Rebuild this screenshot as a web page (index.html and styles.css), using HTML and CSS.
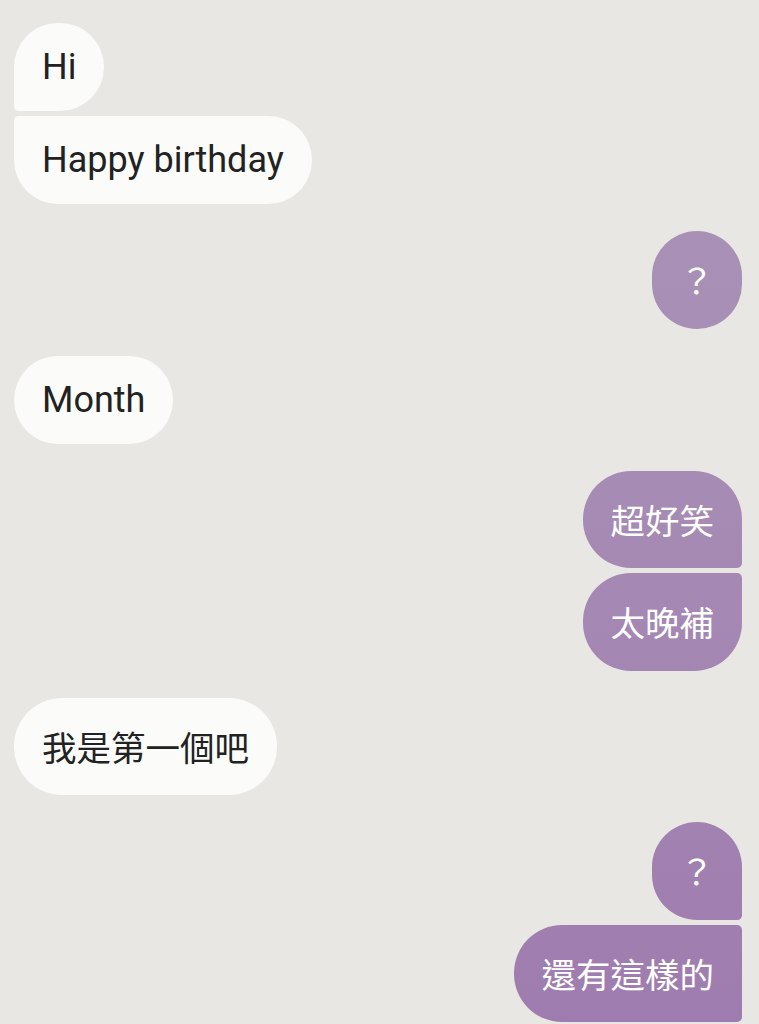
FILE: index.html
```html
<!DOCTYPE html>
<html lang="zh-Hant">
<head>
    <meta charset="UTF-8">
    <meta name="viewport" content="width=device-width, initial-scale=1.0">
    <title>Chat</title>
    <link rel="stylesheet" href="styles.css">
</head>
<body>

<div class="chat">
    <div class="group incoming">
        <div class="bubble first">Hi</div>
        <div class="bubble last">Happy birthday</div>
    </div>

    <div class="group outgoing">
        <div class="bubble cjk">？</div>
    </div>

    <div class="group incoming">
        <div class="bubble">Month</div>
    </div>

    <div class="group outgoing">
        <div class="bubble cjk first">超好笑</div>
        <div class="bubble cjk last">太晚補</div>
    </div>

    <div class="group incoming">
        <div class="bubble cjk">我是第一個吧</div>
    </div>

    <div class="group outgoing">
        <div class="bubble cjk first">？</div>
        <div class="bubble cjk middle">還有這樣的</div>
    </div>
</div>

</body>
</html>
```

FILE: styles.css
```css
body {
    margin: 0;
    padding: 23px 17px 0 14px;
    background-color: #e9e7e3;
    font-family: Roboto, "Noto Sans CJK TC", sans-serif;
    overflow: hidden;
}
.chat {
    display: flex;
    flex-direction: column;
    gap: 27px;
}
.group {
    display: flex;
    flex-direction: column;
    gap: 5px;
}
.incoming {
    align-items: flex-start;
}
.outgoing {
    align-items: flex-end;
}
.bubble {
    padding: 23px 28px;
    font-size: 36px;
    line-height: 42px;
    border-radius: 48px;
    white-space: nowrap;
}
.bubble.cjk {
    padding: 26px 28px 20px;
    font-size: 34.5px;
    line-height: 51.5px;
}
.incoming .bubble {
    background-color: #fbfbfa;
    color: #222;
}
.outgoing .bubble {
    color: #fff;
    background: linear-gradient(180deg, #aa95b7 0px, #a68bb4 500px, #9f7caf 1024px) fixed;
}

/* small corner where bubbles of one group meet */
.incoming .first {
    border-bottom-left-radius: 5px;
}
.incoming .last {
    border-top-left-radius: 5px;
}
.outgoing .first {
    border-bottom-right-radius: 5px;
}
.outgoing .last {
    border-top-right-radius: 5px;
}
.outgoing .middle {
    border-top-right-radius: 5px;
    border-bottom-right-radius: 5px;
}
```
